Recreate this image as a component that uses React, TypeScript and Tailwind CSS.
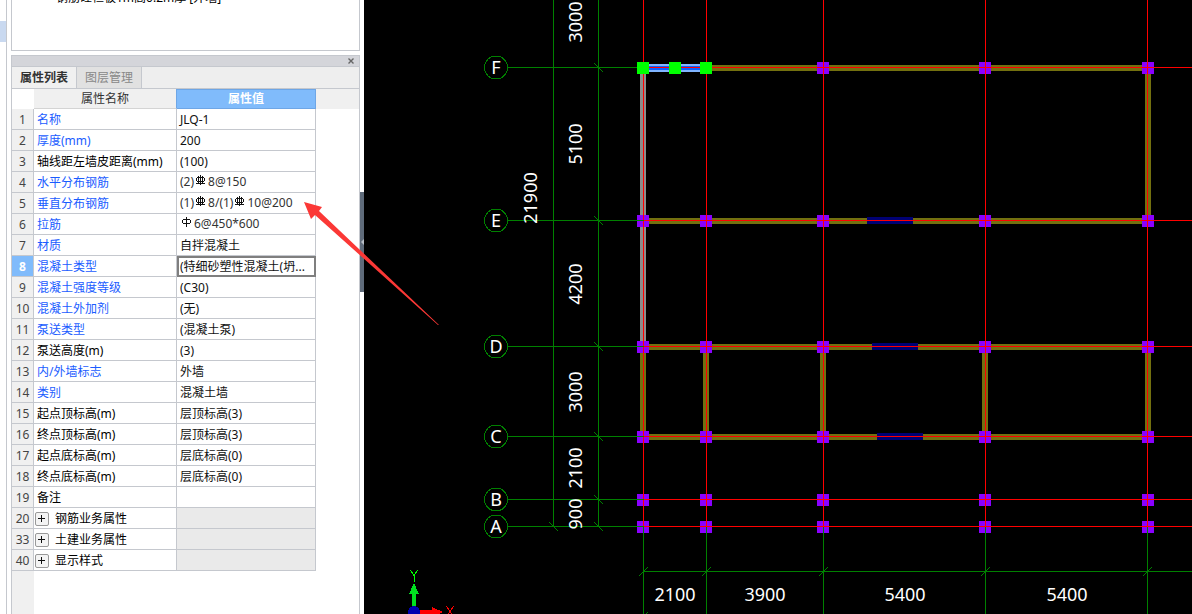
import type { ReactNode } from 'react';

type Row = {
  no: number;
  name: string;
  value?: ReactNode;
  blue?: boolean;
  group?: boolean;
  selected?: boolean;
  rebar?: boolean;
};

// 钢筋等级符号
function Rebar({ grade = 3 }: { grade?: number }) {
  return (
    <svg width="14" height="12" viewBox="0 0 14 12" fill="none" stroke="#111" className="inline-block align-[0px]" shapeRendering="crispEdges">
      <path d="M6.5 1v10" />
      {grade === 3 ? (
        <path d="M3 3.5h7M2.5 4v3M10.500 4v3M3 7.500h7M4.500 2v7M8.500 2v7M2 9.500h9" />
      ) : (
        <path d="M3 3.500h7M2.500 4v3M10.500 4v3M3 7.500h7" />
      )}
    </svg>
  );
}

const rows: Row[] = [
  { no: 1, name: '名称', value: 'JLQ-1', blue: true },
  { no: 2, name: '厚度(mm)', value: '200', blue: true },
  { no: 3, name: '轴线距左墙皮距离(mm)', value: '(100)' },
  { no: 4, name: '水平分布钢筋', value: <>(2)<Rebar />8@150</>, blue: true, rebar: true },
  { no: 5, name: '垂直分布钢筋', value: <>(1)<Rebar />8/(1)<Rebar />10@200</>, blue: true, rebar: true },
  { no: 6, name: '拉筋', value: <><Rebar grade={1} />6@450*600</>, blue: true, rebar: true },
  { no: 7, name: '材质', value: '自拌混凝土', blue: true },
  { no: 8, name: '混凝土类型', value: '(特细砂塑性混凝土(坍...', blue: true, selected: true },
  { no: 9, name: '混凝土强度等级', value: '(C30)', blue: true },
  { no: 10, name: '混凝土外加剂', value: '(无)', blue: true },
  { no: 11, name: '泵送类型', value: '(混凝土泵)', blue: true },
  { no: 12, name: '泵送高度(m)', value: '(3)' },
  { no: 13, name: '内/外墙标志', value: '外墙', blue: true },
  { no: 14, name: '类别', value: '混凝土墙', blue: true },
  { no: 15, name: '起点顶标高(m)', value: '层顶标高(3)' },
  { no: 16, name: '终点顶标高(m)', value: '层顶标高(3)' },
  { no: 17, name: '起点底标高(m)', value: '层底标高(0)' },
  { no: 18, name: '终点底标高(m)', value: '层底标高(0)' },
  { no: 19, name: '备注' },
  { no: 20, name: '钢筋业务属性', group: true },
  { no: 33, name: '土建业务属性', group: true },
  { no: 40, name: '显示样式', group: true },
];

function PropertyTable() {
  return (
    <table className="w-[304px] table-fixed border-separate border-spacing-0 text-xs leading-[18px]">
      <colgroup>
        <col className="w-[22px]" />
        <col className="w-[143px]" />
        <col className="w-[139px]" />
      </colgroup>
      <thead>
        <tr className="h-5">
          <td className="bg-white p-0" />
          <th className="border-r border-b border-r-[#6ea6e6] border-b-[#d4d4d4] bg-[#f0f0f0] px-0 pt-px pb-0 font-normal text-[#333]">属性名称</th>
          <th className="border-y border-r border-[#6ea6e6] bg-[#80bbfb] p-0 font-bold text-white">属性值</th>
        </tr>
      </thead>
      <tbody>
        {rows.map((row) => (
          <tr key={row.no} className="h-[21px]">
            <td
              className={`border-r border-b border-[#c5c8ce] px-0 pt-0.5 pb-0 text-center ${
                row.selected ? 'bg-[#80bbfb] font-bold text-white' : 'bg-[#f0f0f0] text-[#444]'
              }`}
            >
              {row.no}
            </td>
            <td
              className={`border-r border-b border-[#c5c8ce] bg-white pt-0.5 pr-0 pb-0 whitespace-nowrap ${row.group ? 'pl-px' : 'pl-[3px]'} ${
                row.blue ? 'text-[#1a5cff]' : 'text-black'
              }`}
            >
              {row.group ? (
                <span className="flex items-center gap-1.5">
                  <button
                    aria-label={`展开${row.name}`}
                    className="flex size-[14px] items-center justify-center rounded-xs border border-[#999] bg-[#f4f4f4]"
                  >
                    <svg width="8" height="8" viewBox="0 0 8 8" stroke="#111" shapeRendering="crispEdges">
                      <path d="M0 3.500h7M3.500 0v7" />
                    </svg>
                  </button>
                  {row.name}
                </span>
              ) : (
                row.name
              )}
            </td>
            <td
              className={`border-r border-b border-[#c5c8ce] pr-0 pb-0 pl-[3px] whitespace-nowrap ${
                row.group ? 'bg-[#eaeaea]' : 'bg-white'
              } ${row.rebar ? 'pt-0 text-[#333]' : 'pt-0.5 text-[#111]'} ${
                row.selected ? 'outline-2 -outline-offset-2 outline-[#7f7f7f]' : ''
              }`}
            >
              {row.value}
            </td>
          </tr>
        ))}
      </tbody>
    </table>
  );
}

function Sidebar() {
  return (
    <aside className="flex w-[364px] shrink-0 bg-white">
      <div className="w-[7px] shrink-0 border-r border-[#c5c8ce] pt-[21px]">
        <div className="h-[21px] bg-[#c9d9f0]" />
      </div>
      <div className="ml-1 flex w-[349px] shrink-0 flex-col">
        <div className="h-[51px] overflow-hidden border-x border-b border-[#c5c8ce]">
          <p className="-mt-3 pl-11 text-xs leading-5 text-black">钢筋砼栏板1m高0.2m厚 [外墙]</p>
        </div>
        <section className="mt-1 flex flex-1 flex-col border-x border-t border-[#c5c8ce]">
          <div className="flex h-[11px] items-center justify-end border-b border-[#c5c8ce] bg-[#d4d5da] pr-[5px]">
            <button aria-label="关闭">
              <svg width="6" height="6" viewBox="0 0 6 6" stroke="#666" strokeWidth="1.4">
                <path d="M0.5 0.5l5 5M5.5 0.5l-5 5" />
              </svg>
            </button>
          </div>
          <div className="flex h-[22px] border-b border-[#c5c8ce] bg-[#eeeeee] text-xs leading-5">
            <button className="w-[65px] border-r border-[#c5c8ce] bg-[#f0f0f0] font-bold text-[#333]">属性列表</button>
            <button className="w-[65px] border-r border-[#c5c8ce] bg-[#e1e1e1] text-[#888]">图层管理</button>
          </div>
          <div className="flex">
            <PropertyTable />
            <div className="h-5 flex-1 bg-[#f0f0f0]" />
          </div>
          <div className="w-[22px] flex-1 bg-[#f0f0f0]" />
        </section>
      </div>
      <button aria-label="收起面板" className="mt-48 flex h-[100px] w-1 items-center bg-[#5f6b7a]">
        <svg width="4" height="6" viewBox="0 0 4 6" fill="#b8bec6">
          <path d="M1 3L4 0v6z" />
        </svg>
      </button>
    </aside>
  );
}

// 轴网坐标
const xs = [643, 706, 823, 985, 1147];
const squareXs = [637, 700, 817, 979, 1142];
const axes = [
  { label: 'F', y: 67 },
  { label: 'E', y: 220 },
  { label: 'D', y: 346 },
  { label: 'C', y: 436 },
  { label: 'B', y: 499 },
  { label: 'A', y: 526 },
];
const verticalDims = [
  { text: '3000', x: 582, y: 22 },
  { text: '5100', x: 582, y: 144 },
  { text: '21900', x: 537, y: 198 },
  { text: '4200', x: 582, y: 284 },
  { text: '3000', x: 582, y: 392 },
  { text: '2100', x: 582, y: 468 },
  { text: '900', x: 582, y: 514 },
];
const horizontalDims = [
  { text: '2100', x: 675 },
  { text: '3900', x: 765 },
  { text: '5400', x: 905 },
  { text: '5400', x: 1067 },
];
const windows = [
  { x: 867, y: 217 },
  { x: 872, y: 343 },
  { x: 877, y: 433 },
];

function Drawing() {
  return (
    <svg className="block h-full w-full" role="img" aria-label="墙体平面图">
      <g transform="translate(-364 0)" shapeRendering="crispEdges">
        {/* 墙 */}
        <g fill="#73700f">
          <rect x="706" y="65" width="442" height="6" />
          <rect x="643" y="218" width="505" height="6" />
          <rect x="643" y="344" width="505" height="6" />
          <rect x="643" y="434" width="505" height="6" />
          <rect x="1145" y="68" width="6" height="153" />
          <rect x="640" y="347" width="6" height="90" />
          <rect x="703" y="347" width="6" height="90" />
          <rect x="820" y="347" width="6" height="90" />
          <rect x="982" y="347" width="6" height="90" />
          <rect x="1145" y="347" width="6" height="90" />
        </g>
        <rect x="640" y="68" width="6" height="279" fill="#8c8c8c" />
        <rect x="643" y="64" width="63" height="8" fill="#80b4ff" />
        <rect x="643" y="66" width="63" height="4" fill="#0a60ff" />
        {windows.map((w) => (
          <rect key={w.y} x={w.x} y={w.y} width="46" height="7" fill="#000073" />
        ))}

        {/* 柱 */}
        <g fill="#8a00ff">
          {axes.map((a) =>
            squareXs.map((x) => <rect key={`${a.label}-${x}`} x={x} y={a.y - 5} width="12" height="12" />)
          )}
        </g>

        {/* 轴线 */}
        <g fill="#ff0000">
          {xs.map((x) => (
            <rect key={x} x={x} y="0" width="1" height="526" />
          ))}
          {axes.map((a) => (
            <rect key={a.label} x="643" y={a.y} width="100%" height="1" />
          ))}
        </g>
        <g fill="#008000">
          {axes.map((a) => (
            <rect key={a.label} x="508" y={a.y} width="136" height="1" />
          ))}
          {xs.map((x) => (
            <rect key={x} x={x} y="527" width="1" height="100%" />
          ))}
          <rect x="553" y="0" width="1" height="527" />
          <rect x="598" y="0" width="1" height="527" />
          <rect x="643" y="571" width="100%" height="1" />
        </g>
        <g stroke="#008000">
          {axes.map((a) => (
            <path key={a.label} d={`M594 ${a.y - 4}l9 9`} />
          ))}
          <path d="M549 522l9 9" />
          {xs.map((x) => (
            <path key={x} d={`M${x - 4} 576l9 -9`} />
          ))}
          <path d="M643 617l5 -5" />
        </g>

        {/* 选中夹点 */}
        <g fill="#00ff00">
          <rect x="637" y="62" width="12" height="12" />
          <rect x="669" y="62" width="12" height="12" />
          <rect x="700" y="62" width="12" height="12" />
        </g>

        {/* 轴号与尺寸 */}
        <g fill="none" stroke="#008000">
          {axes.map((a) => (
            <circle key={a.label} cx="496" cy={a.y + 0.5} r="11.5" />
          ))}
        </g>
        <g fill="#ffffff" textAnchor="middle" className="text-[18px]">
          {axes.map((a) => (
            <text key={a.label} x="496" y={a.y + 7}>{a.label}</text>
          ))}
          {verticalDims.map((d) => (
            <text key={d.y} transform={`translate(${d.x} ${d.y}) rotate(-90)`}>{d.text}</text>
          ))}
          {horizontalDims.map((d) => (
            <text key={d.x} x={d.x} y="601">{d.text}</text>
          ))}
        </g>

        {/* 坐标系图标 */}
        <rect x="412" y="592" width="4" height="18" fill="#00e020" />
        <path d="M414 583l5 11h-10z" fill="#00e020" />
        <rect x="416" y="610" width="18" height="4" fill="#ff0000" />
        <path d="M432 607l11 5l-11 5z" fill="#ff0000" />
        <circle cx="414" cy="612" r="6" fill="#0000b0" />
        <path d="M410.500 570.500l3.500 5v6M417.500 570.500l-3.500 5" fill="none" stroke="#00ff00" />
        <path d="M446.500 606.500l7 10M453.500 606.500l-7 10" fill="none" stroke="#ff0000" />
      </g>
    </svg>
  );
}

export default function App() {
  return (
    <div className="relative flex min-h-screen bg-white font-['Noto_Sans','Noto_Sans_CJK_SC',sans-serif]">
      <Sidebar />
      <main className="min-w-0 flex-1 overflow-hidden bg-black">
        <Drawing />
      </main>
      {/* 批注箭头 */}
      <svg className="pointer-events-none absolute top-[200px] left-[300px]" width="142" height="128" viewBox="300 200 142 128" fill="#fb3836">
        <path d="M304 202L322 207L319 211L439 325L438 325L315 215L311 219Z" />
      </svg>
    </div>
  );
}
